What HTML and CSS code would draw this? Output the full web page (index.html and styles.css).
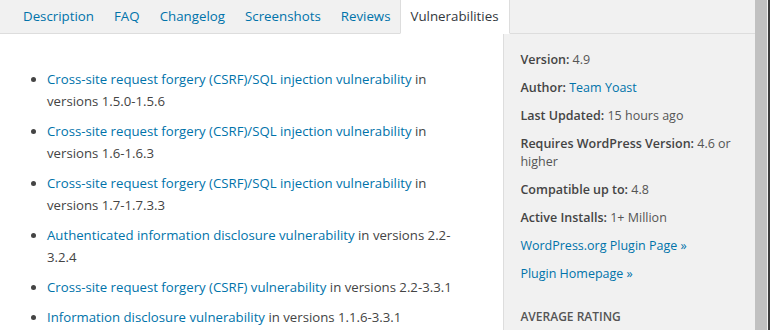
FILE: index.html
```html
<!DOCTYPE html>
<html lang="en">
<head>
    <meta charset="UTF-8">
    <meta name="viewport" content="width=device-width, initial-scale=1.0">
    <title>Plugin information</title>
    <link rel="stylesheet" href="styles.css">
</head>
<body>
    <div class="window">
        <div class="viewport">
            <!-- Tabs -->
            <nav class="tabs">
                <a href="#" class="tab">Description</a>
                <a href="#" class="tab">FAQ</a>
                <a href="#" class="tab">Changelog</a>
                <a href="#" class="tab">Screenshots</a>
                <a href="#" class="tab">Reviews</a>
                <a href="#" class="tab current">Vulnerabilities</a>
            </nav>

            <div class="holder">
                <!-- Vulnerabilities section -->
                <div class="section">
                    <ul class="vulns">
                        <li><a href="#">Cross-site request forgery (CSRF)/SQL injection vulnerability</a> in versions 1.5.0-1.5.6</li>
                        <li><a href="#">Cross-site request forgery (CSRF)/SQL injection vulnerability</a> in versions 1.6-1.6.3</li>
                        <li><a href="#">Cross-site request forgery (CSRF)/SQL injection vulnerability</a> in versions 1.7-1.7.3.3</li>
                        <li><a href="#">Authenticated information disclosure vulnerability</a> in versions 2.2-3.2.4</li>
                        <li><a href="#">Cross-site request forgery (CSRF) vulnerability</a> in versions 2.2-3.3.1</li>
                        <li><a href="#">Information disclosure vulnerability</a> in versions 1.1.6-3.3.1</li>
                    </ul>
                </div>

                <!-- Sidebar -->
                <aside class="fyi">
                    <ul>
                        <li><strong>Version:</strong> 4.9</li>
                        <li><strong>Author:</strong> <a href="#">Team Yoast</a></li>
                        <li><strong>Last Updated:</strong> 15 hours ago</li>
                        <li><strong>Requires WordPress Version:</strong> 4.6 or higher</li>
                        <li><strong>Compatible up to:</strong> 4.8</li>
                        <li><strong>Active Installs:</strong> 1+ Million</li>
                        <li><a href="#">WordPress.org Plugin Page &raquo;</a></li>
                        <li><a href="#">Plugin Homepage &raquo;</a></li>
                    </ul>
                    <h3>Average Rating</h3>
                </aside>
            </div>
        </div>
        <div class="scrollbar"></div>
    </div>
</body>
</html>
```

FILE: styles.css
```css
/* Base */
html, body {
    margin: 0;
    height: 100%;
    overflow: hidden;
}

body {
    font-family: 'Open Sans', 'Noto Sans', sans-serif;
    font-size: 13px;
    color: #444;
    background-color: #fff;
}

a {
    color: #0073aa;
    text-decoration: none;
}

.window {
    display: flex;
    height: 100%;
}

.viewport {
    flex-grow: 1;
    min-width: 0;
    display: flex;
    flex-direction: column;
}

/* Tabs */
.tabs {
    flex-shrink: 0;
    display: flex;
    height: 33px;
    padding-left: 13px;
    background-color: #f1f1f1;
    border-bottom: 1px solid #ddd;
}

.tab {
    display: flex;
    align-items: center;
    padding: 0 10px 1px;
    font-size: 13.3px;
}

.tab.current {
    margin: 0 -1px -1px;
    background-color: #fff;
    border: 1px solid #ddd;
    border-top: none;
    border-bottom-color: #fff;
    color: #32373c;
}

/* Content */
.holder {
    flex-grow: 1;
    display: flex;
}

.section {
    flex-grow: 1;
    min-width: 0;
    padding: 34px 35px 0 0;
}

.vulns {
    margin: 0;
    padding-left: 47px;
    font-size: 13.2px;
    line-height: 22px;
}

.vulns li {
    margin-bottom: 8px;
}

/* Sidebar */
.fyi {
    flex-shrink: 0;
    width: 235px;
    padding: 0 0 0 16px;
    background-color: #f1f1f1;
    border-left: 1px solid #ddd;
    font-size: 12.5px;
}

.fyi ul {
    margin: 0;
    padding: 17px 0 0;
    list-style: none;
    line-height: 18px;
    color: #555;
}

.fyi li {
    margin-bottom: 10px;
}

.fyi strong {
    font-weight: 600;
    color: #444;
}

.fyi h3 {
    margin: 25px 0 8px;
    font-size: 12px;
    font-weight: 600;
    text-transform: uppercase;
    color: #555;
}

/* Fake scrollbar */
.scrollbar {
    width: 13px;
    background-color: #c1c1c1;
    border-right: 1px solid #f1f1f1;
}

.window::after {
    content: "";
    width: 2px;
    background-color: #3c3c3c;
}
```
